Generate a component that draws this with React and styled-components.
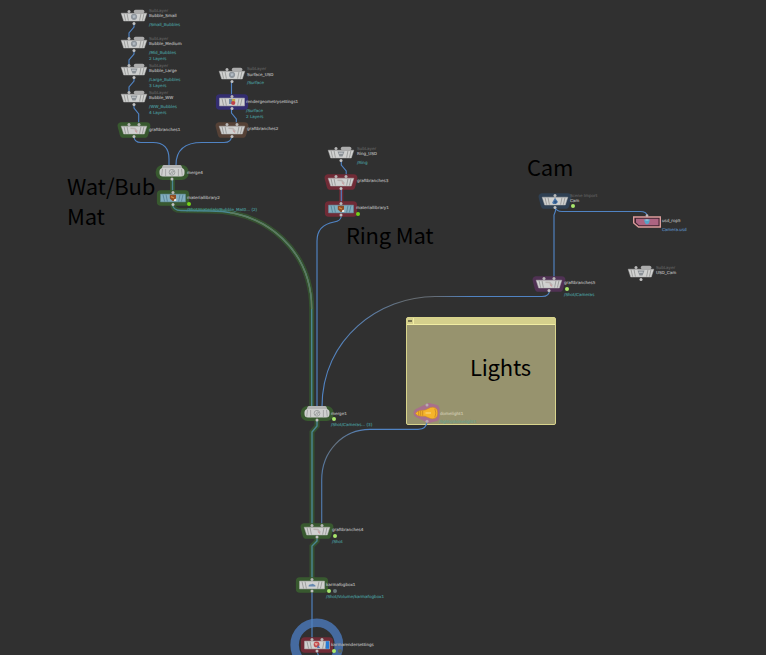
import React from 'react';
import styled, { createGlobalStyle } from 'styled-components';

const Global = createGlobalStyle`
  body { margin: 0; background: #303030; overflow: hidden; }
`;
const Canvas = styled.main`
  position: relative;
  width: 766px;
  height: 655px;
  overflow: hidden;
  background: #303030;
  font-family: "Noto Sans CJK SC", "Noto Sans", sans-serif;
`;
const Wires = styled.svg`
  position: absolute;
  inset: 0;
  fill: none;
  stroke: #5083c3;
  stroke-width: 1.15;
`;
const Placed = styled.div`
  position: absolute;
  left: ${p => p.$x}px;
  top: ${p => p.$y}px;
`;
const Glyph = styled.svg`
  position: absolute;
  left: -20px;
  top: -16px;
  overflow: visible;
`;
const tones = { name: '#a6a6a6', kind: '#5a5a5a', path: '#468b8d', file: '#557fad', faint: '#c9c4a8', tint: '#6fa08a' };
const Label = styled.span`
  position: absolute;
  left: ${p => p.$x}px;
  top: ${p => p.$y - 4}px;
  line-height: 8px;
  font-family: "DejaVu Sans", sans-serif;
  font-size: 4.1px;
  white-space: nowrap;
  color: ${p => tones[p.$tone]};
  -webkit-text-stroke: 0.18px ${p => tones[p.$tone]};
`;
const Status = styled.i`
  position: absolute;
  left: ${p => p.$x - 2}px;
  top: ${p => p.$y - 2}px;
  width: 4px;
  height: 4px;
  border-radius: 50%;
  background: ${p => p.$c || '#a9e86c'};
`;
const Title = styled.h2`
  position: absolute;
  left: ${p => p.$x}px;
  top: ${p => p.$y}px;
  margin: 0;
  width: 110px;
  color: #000;
  font-size: 22px;
  letter-spacing: -0.2px;
  font-weight: 400;
  line-height: 30px;
`;
const Group = styled.section`
  position: absolute;
  left: 406px;
  top: 317px;
  width: 148px;
  height: 106px;
  border: 1px solid #d8d48c;
  border-radius: 2px;
  background: #97936e;
`;
const GroupBar = styled.header`
  display: flex;
  height: 6px;
  background: #d5d08c;
  border-bottom: 1px solid #f1eda2;
`;
const Collapse = styled.span`
  width: 6px;
  border-right: 1px solid #f1eda2;
  display: flex;
  align-items: center;
  justify-content: center;
  &::after { content: ''; width: 4px; height: 2px; background: #77744f; }
`;

const TRAP = 'M-12.8 -3.8H12.8L10.3 4H-10.3Z';
const RECT = 'M-12.5 -3.9H12.5V3.9H-12.5Z';

function Mark({ type }) {
  switch (type) {
    case 'layer':
      return <g><path d="M-3.5 -2.5H3.5L1.5 2.5H-1.5Z" fill="#8b9196" /><path d="M-2 -.8H1.8" stroke="#d8dde0" strokeWidth=".9" /></g>;
    case 'globe':
      return <g><circle r="3.1" cy="-.2" fill="#8d949b" /><path d="M-1.5 -1.5L1.3 -1.8L1.6 .6L-1 1Z" fill="#b3bcc5" /></g>;
    case 'graft':
      return <g><path d="M-3.5 -1.8L.8 -1.5L3.4 1.6" fill="none" stroke="#b9b3b1" strokeWidth="1.5" /><path d="M.8 .4L3.2 2.6" stroke="#c88a8e" strokeWidth="1" /></g>;
    case 'geo':
      return <g><path d="M-3 -3H1V2H-3Z" fill="#6e87a2" /><path d="M0 -3H3.2V1H0Z" fill="#c6a84b" /><circle cx="1.2" cy="1" r="2.1" fill="#c0424b" /></g>;
    case 'material':
      return <g><path d="M-3.2 -3.3H3V.8L0 3.3L-3.2 .5Z" fill="#8d4d26" /><path d="M-2 -1.4L1 0" stroke="#d08a44" strokeWidth="1.3" /><path d="M1 1.6L3.2 .4V3H1Z" fill="#eeeae2" /></g>;
    case 'merge':
      return <g fill="none" stroke="#989c9c"><circle cy=".3" r="2.9" strokeWidth=".9" /><path d="M-1.8 2L.8 -1.6M0 2L1.8 -1" strokeWidth=".9" /></g>;
    case 'camera':
      return <g><path d="M-2.8 1.5L0 -3.3L3 1L1 3.1H-2Z" fill="#4b76a8" /><circle cx=".4" cy="1" r="1.4" fill="#2f5788" /></g>;
    case 'fog':
      return <path d="M-3.5 1.5A2 2 0 0 1 -1 -.6A2 2 0 0 1 2 -.4A2 1.6 0 0 1 3.5 1.5Z" fill="#6688ae" />;
    default:
      return <g><circle cx="-.4" cy="-.6" r="2.9" fill="#c4494c" /><path d="M-2.5 -2L1 -1.5L-1 1Z" fill="#e4b0a0" /><path d="M1 0L3.2 3H0Z" fill="#5076ad" /></g>;
  }
}

function Body({ shape, icon, halo, blue, flag, dots = [-5], blob, out = 6.5 }) {
  const trap = shape === 'trap';
  const merge = shape === 'merge';
  return (
    <Glyph width="40" height="32" viewBox="-20 -16 40 32">
      {halo && (merge
        ? <rect x="-16.3" y="-7" width="33" height="15" rx="7" fill={halo} />
        : <path d={trap ? 'M-12.6 -4H12.6L10.5 4H-10.5Z' : 'M-12.3 -4H12.3V4H-12.3Z'} fill={halo} stroke={halo} strokeWidth="7.6" strokeLinejoin="round" />)}
      {merge ? <g>
        <path d="M-10.5 -3.2L-9.5 -6Q-9 -7 -8 -7H8Q9 -7 9.5 -6L10.5 -3.2Z" fill="#b4b5b4" />
        <rect x="-12.5" y="-4" width="25" height="8.6" rx="3.5" fill="#cfd0cf" />
        <path d="M-9.5 -3L-10.3 3.6M-6.4 -3V4M6.4 -3V4M9.5 -3L10.3 3.6" stroke="#9a9b9a" strokeWidth=".8" />
      </g> : <g>
        <path d={trap ? TRAP : RECT} fill={blue ? '#83aebf' : '#d0d1d0'} stroke={blue ? '#638d9e' : '#b0b0b0'} strokeWidth=".5" />
        <path d="M-10 -3.4L-8.4 3.6M-7 -3.4L-5.6 3.6M7 -3.4L5.6 3.6M10 -3.4L8.4 3.6" stroke={blue ? '#588396' : '#979897'} strokeWidth=".9" />
      </g>}
      {flag && <rect x="8.7" y="-3.8" width="3.4" height="7.6" fill="#247bd6" />}
      <Mark type={icon} />
      {dots.map(x => <circle key={x} cx={x} cy="-5.5" r="1.5" fill="#b8b8b8" />)}
      {blob && <rect x="-.2" y="-7.2" width="10.6" height="3.4" rx="1.7" fill="#acacac" />}
      <circle cy={out} r="1.5" fill="#c0c0c0" />
    </Glyph>
  );
}

const G = '#38592f', R = '#702b36';
const nodes = [
  { x: 134, y: 16.5, shape: 'trap', icon: 'globe', blob: true },
  { x: 134, y: 44, shape: 'trap', icon: 'globe', blob: true },
  { x: 134, y: 71, shape: 'trap', icon: 'layer', blob: true },
  { x: 134, y: 98, shape: 'trap', icon: 'layer', blob: true },
  { x: 134, y: 129.5, shape: 'trap', icon: 'graft', halo: G, dots: [-5, 5] },
  { x: 231.5, y: 74.5, shape: 'trap', icon: 'globe', blob: true },
  { x: 231.5, y: 102, shape: 'rect', icon: 'geo', halo: '#332d70', dots: [0] },
  { x: 231.5, y: 129.5, shape: 'trap', icon: 'graft', halo: '#554136', dots: [-5, 5] },
  { x: 172.3, y: 172, shape: 'merge', icon: 'merge', halo: G, dots: [], out: 7 },
  { x: 172.5, y: 198, shape: 'rect', icon: 'material', halo: G, dots: [0], blue: true },
  { x: 341.3, y: 154.2, shape: 'trap', icon: 'layer', blob: true },
  { x: 341.3, y: 181.7, shape: 'trap', icon: 'graft', halo: R, dots: [-5, 5] },
  { x: 341.3, y: 209, shape: 'rect', icon: 'material', halo: R, dots: [0], blue: true, out: 6 },
  { x: 555.4, y: 200.5, shape: 'trap', icon: 'camera', halo: '#2f4053', dots: [0] },
  { x: 641, y: 272.7, shape: 'trap', icon: 'layer', blob: true },
  { x: 549.3, y: 283.7, shape: 'trap', icon: 'graft', halo: '#503254', dots: [-5, 5] },
  { x: 316.8, y: 413, shape: 'merge', icon: 'merge', halo: G, dots: [], out: 7 },
  { x: 316.8, y: 530.5, shape: 'trap', icon: 'graft', halo: G, dots: [-5, 5], out: 6 },
  { x: 312, y: 585, shape: 'rect', icon: 'fog', halo: G, dots: [0], out: 6 },
  { x: 316.8, y: 645, shape: 'rect', icon: 'karma', halo: R, dots: [-5, 5], flag: true, out: 6 },
];

const labels = [
  [149, 11, 'SubLayer', 'kind'], [149, 16, 'Bubble_Small', 'name'], [149, 24.8, '/Small_Bubbles', 'path'],
  [149, 38.7, 'SubLayer', 'kind'], [149, 43.7, 'Bubble_Medium', 'name'], [149, 52.7, '/Mid_Bubbles', 'path'], [149, 58.7, '2 Layers', 'path'],
  [149, 65.7, 'SubLayer', 'kind'], [149, 70.8, 'Bubble_Large', 'name'], [149, 79.7, '/Large_Bubbles', 'path'], [149, 85.7, '3 Layers', 'path'],
  [149, 92.7, 'SubLayer', 'kind'], [149, 97.8, 'Bubble_WW', 'name'], [149, 106.8, '/WW_Bubbles', 'path'], [149, 112.7, '4 Layers', 'path'],
  [149, 129.5, 'graftbranches1', 'name'],
  [247, 68.7, 'SubLayer', 'kind'], [247, 74.7, 'Surface_USD', 'name'], [247, 82.7, '/Surface', 'path'],
  [246, 101.7, 'rendergeometrysettings1', 'name'], [246, 110.7, '/Surface', 'path'], [246, 116.7, '2 Layers', 'path'],
  [247, 128.7, 'graftbranches2', 'name'],
  [187, 172.7, 'merge4', 'name'], [187, 197.7, 'materiallibrary2', 'name'], [187, 209.8, '/Shot/materials/Bubble_Mat0... (2)', 'path'],
  [357, 148.7, 'SubLayer', 'kind'], [357, 153.8, 'Ring_USD', 'name'], [357, 162.8, '/Ring', 'path'],
  [357, 180.8, 'graftbranches3', 'name'], [356, 207.8, 'materiallibrary1', 'name'],
  [570, 195.7, 'Scene Import', 'kind'], [570, 200.8, 'Cam', 'name'],
  [662, 220.7, 'usd_rop5', 'name'], [662, 229.8, 'Camera.usd', 'file'],
  [656, 267.7, 'SubLayer', 'kind'], [656, 272.7, 'USD_Cam', 'name'],
  [564, 282.7, 'graftbranches5', 'name'], [564, 294.7, '/Shot/Cameras', 'path'],
  [331, 413.7, 'merge1', 'name'], [331, 424.7, '/Shot/Cameras... (3)', 'path'],
  [440, 413.7, 'domelight1', 'faint'], [439, 421.8, '/lights/domelight1', 'tint'],
  [332, 529.7, 'graftbranches4', 'name'], [332, 541.7, '/Shot', 'path'],
  [326, 584.7, 'karmafogbox1', 'name'], [326, 596.7, '/Shot/Volume/karmafogbox1', 'path'],
  [331, 644.7, 'karmarendersettings', 'name'],
];
const statuses = [
  [189.3, 203.5, '#72d219'], [358.3, 214.2, '#72d219'], [572.5, 206], [567, 289], [334, 419],
  [334.5, 536], [329, 590.5], [334.5, 590.5, '#657477'], [334, 650.5], [339.5, 650.5, '#59645b'],
];

const greenWires = [
  'M172.5 180V192',
  'M172.5 204Q173 210.5 181 210.5L210 211C268 211 311.7 252 311.7 309V407',
  'M317 421V426L312 432V524',
  'M317 537V541L312 546V579',
];
const plainWires = [
  'M134 23V27L129 33V38', 'M134 50V54L129 60V65', 'M134 77V81L129 87V92', 'M134 104V108L138.7 114V124',
  'M231.5 81V96', 'M231.5 108V113L236.3 119V124',
  'M134 136Q134 142.5 141 142.5H153Q169 142.5 169 159V165',
  'M231.5 136Q231.5 142.5 224 142.5H202Q176 142.5 176 165',
  'M341.3 160V165L346.2 171V176', 'M341.3 188V203',
  'M341.3 216Q341 221 334 222Q317 225 317 241V407',
  'M555.5 207V211L554 215V278', 'M555.5 207Q556 211.5 562 211.5H640Q647 211.5 647 216',
  'M427 421Q427 429 418 429.4H370',
];

export default function App() {
  return (
    <Canvas>
      <Global />
      <Title $x={67} $y={170}>Wat/Bub Mat</Title>
      <Title $x={346} $y={219}>Ring Mat</Title>
      <Title $x={527} $y={151}>Cam</Title>
      <Group>
        <GroupBar><Collapse /></GroupBar>
      </Group>
      <Title $x={470} $y={351}>Lights</Title>
      <Wires width="766" height="655">
        <defs>
          <linearGradient id="camWire" gradientUnits="userSpaceOnUse" x1="322" y1="0" x2="549" y2="0">
            <stop offset="0" stopColor="#5083c3" /><stop offset=".2" stopColor="#5b7fab" />
            <stop offset=".38" stopColor="#666c70" /><stop offset=".5" stopColor="#646d78" />
            <stop offset=".65" stopColor="#5083c3" />
          </linearGradient>
          <linearGradient id="lightWire" gradientUnits="userSpaceOnUse" x1="322" y1="480" x2="370" y2="429">
            <stop offset="0" stopColor="#5079ab" /><stop offset=".5" stopColor="#65727f" /><stop offset="1" stopColor="#5083c3" />
          </linearGradient>
        </defs>
        <circle cx="316.8" cy="645" r="22.2" stroke="#456a9f" strokeWidth="8.5" />
        <path d="M341.3 188V203" stroke={R} strokeWidth="4" />
        {greenWires.map(d => <g key={d}>
          <path d={d} stroke="#35502f" strokeWidth="5" />
          <path d={d} stroke="#4a8792" strokeWidth="1.4" />
        </g>)}
        <path d="M230 212.5C277 221 311.7 258 311.7 309" stroke="#5f7b5d" strokeWidth="1.4" />
        {plainWires.map(d => <path key={d} d={d} />)}
        <path d="M549.5 290Q549.5 296.5 542 296.5H435C380 296.5 322 338 322 407" stroke="url(#camWire)" />
        <path d="M321.7 524V480C321.7 451 343 429.4 370 429.4" stroke="url(#lightWire)" />
        <path d="M312 591V640" />
        <path d="M317 651L318.5 656" />
      </Wires>
      {nodes.map(n => <Placed key={`${n.x}-${n.y}`} $x={n.x} $y={n.y}><Body {...n} /></Placed>)}
      <Placed $x={647} $y={221.5}>
        <Glyph width="40" height="32" viewBox="-20 -16 40 32">
          <path d="M-13.3 -5H13.3V5H-8.5L-13.3 1Z" fill="#402330" stroke="#dd9d9c" strokeWidth="1.4" />
          <path d="M-11 -3.2H11.5V3.2H-8L-11 .5Z" fill="#ad6481" />
          <path d="M-3 -2.6H3L2 1.2L0 2.5L-2 1.2Z" fill="#55a4c8" />
          <path d="M-1.5 -2H1.5" stroke="#a6d4e5" />
          <circle cy="-6.3" r="1.4" fill="#c2b4b4" />
        </Glyph>
      </Placed>
      <Placed $x={427} $y={413.3}>
        <Glyph width="40" height="32" viewBox="-20 -16 40 32">
          <path d="M-9 0L-5 -2L2 -5.5L8 -4V4L2 5.5L-5 2Z" fill="#a8708c" stroke="#a8708c" strokeWidth="9" strokeLinejoin="round" />
          <path d="M-11.5 .5Q-10 -2.3 -6 -2.6L-2 -2.9L3.5 -5.5Q8 -6.8 10 -3.4Q11.4 0 10 3.4Q8 6.8 3.5 5.5L-2 3.2H-6Q-10 3 -11.5 .5Z" fill="#f6b42a" stroke="#c68724" strokeWidth=".5" />
          <path d="M-8.3 -1.8V2.2M-6.3 -2.2V2.6M-4.3 -2.2V2.6" stroke="#b97a20" strokeWidth=".7" />
          <path d="M7.8 -4.4Q10 0 7.8 4.4" fill="none" stroke="#c68724" strokeWidth=".8" />
          <path d="M-1.5 0H4" stroke="#f9cd68" strokeWidth="1.6" />
          <circle cy="-8" r="1.5" fill="#b6aab1" /><circle cy="8.3" r="1.5" fill="#b6aab1" />
        </Glyph>
      </Placed>
      {labels.map(([x, y, text, tone]) => <Label key={`${x}-${y}`} $x={x} $y={y} $tone={tone}>{text}</Label>)}
      {statuses.map(([x, y, c]) => <Status key={`${x}-${y}`} $x={x} $y={y} $c={c} />)}
    </Canvas>
  );
}
